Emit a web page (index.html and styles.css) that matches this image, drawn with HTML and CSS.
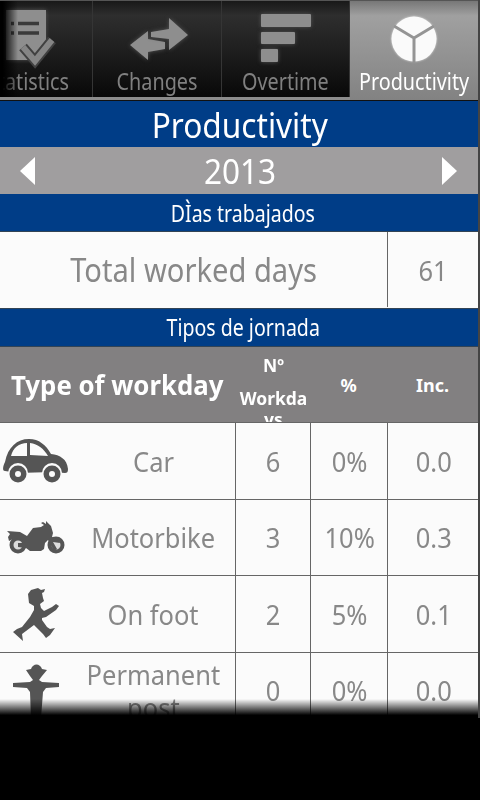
FILE: index.html
```html
<!DOCTYPE html>
<html lang="en">

<head>
  <meta charset="UTF-8">
  <title>Productivity</title>
  <link rel="stylesheet" href="styles.css">
</head>

<body>
  <div class="screen">
    <nav class="tabs">
      <div class="tab tab-cut">
        <svg width="56" height="60" viewBox="0 0 56 60">
          <path class="soft" d="M6 9h40v34l-9 12v4H6z" />
          <path class="dark-line" d="M11 22.500h3M18 22.500h21M11 32h3M18 32h21" />
          <path class="check-edge" d="M23 46l12 14 17-21" />
          <path class="check" d="M23 46l12 14 17-21" />
        </svg>
        <span class="label">Statistics</span>
      </div>
      <div class="tab">
        <svg width="60" height="60" viewBox="0 0 60 60">
          <path class="soft" d="M3 44L21 30v8l17 3v7l-17 3v8z" />
          <path class="soft" d="M24 31l18-3V17l19 17-19 15V38l-18-2z" />
        </svg>
        <span class="label">Changes</span>
      </div>
      <div class="tab">
        <svg width="60" height="60" viewBox="0 0 60 60">
          <rect class="soft" x="5" y="13" width="50" height="13" rx="1" />
          <rect class="soft" x="5" y="31" width="34" height="12" rx="1" />
          <rect class="soft" x="5" y="48" width="17" height="13" rx="1" />
        </svg>
        <span class="label">Overtime</span>
      </div>
      <div class="tab active">
        <svg width="60" height="60" viewBox="0 0 60 60">
          <circle class="pie" cx="30" cy="38" r="22.500" />
          <path class="pie-cut" d="M30 62V37L10 25M30 37l20-12" />
        </svg>
        <span class="label">Productivity</span>
      </div>
    </nav>

    <h1 class="title"><span>Productivity</span></h1>
    <div class="year">
      <svg width="15" height="28" viewBox="0 0 15 28"><path d="M15 0v28L0 14z" /></svg>
      <span>2013</span>
      <svg width="15" height="28" viewBox="0 0 15 28"><path d="M0 0v28l15-14z" /></svg>
    </div>
    <h2 class="section"><span>DÌas trabajados</span></h2>
    <div class="total">
      <div class="cell"><span>Total worked days</span></div>
      <div class="cell number"><span>61</span></div>
    </div>
    <h2 class="section types"><span>Tipos de jornada</span></h2>

    <div class="row head">
      <div class="type"><span>Type of workday</span></div>
      <div class="count"><p>Nº</p><p>Workda<br>ys</p></div>
      <div class="small"><span>%</span></div>
      <div class="small"><span>Inc.</span></div>
    </div>
    <div class="row">
      <div class="name">
        <svg width="72" height="76" viewBox="0 0 72 76">
          <path fill-rule="evenodd" d="M5 48C2 48 3 43 5 39C8 24 17 16 29 16c10 0 17 6 22 15c9 1 16 5 17 15c0 3-1 4-3 4l-13-1-34 1zM11 33h16V20c-8 0-14 5-16 13zM30 20v12l18 1c-4-7-10-12-18-13z" />
          <circle class="gap" cx="18" cy="50" r="10" /><circle class="gap" cx="52" cy="50" r="10" />
          <circle cx="18" cy="51" r="8.500" /><circle cx="52" cy="51" r="8.500" />
          <circle class="gap" cx="18" cy="51" r="3" /><circle class="gap" cx="52" cy="51" r="3" />
        </svg>
        <span>Car</span>
      </div>
      <div class="cell"><span>6</span></div>
      <div class="cell"><span>0%</span></div>
      <div class="cell"><span>0.0</span></div>
    </div>
    <div class="row">
      <div class="name">
        <svg width="72" height="76" viewBox="0 0 72 76">
          <circle class="wheel" cx="18" cy="45" r="6.500" />
          <circle class="wheel" cx="56" cy="45" r="6.500" />
          <path d="M7 31l13 1 7 4 6-8 8-1 3-2-3-2 2-1 3 2v-3l5 5 2 7-1 4 7 3 1 3-7-1 4 7-3 2-6-11-3 3-1 6-3 2H30l-4-3-8-1v-4h7l-3-3-7-2-6 3-1-4 2-3z" />
        </svg>
        <span>Motorbike</span>
      </div>
      <div class="cell"><span>3</span></div>
      <div class="cell"><span>10%</span></div>
      <div class="cell"><span>0.3</span></div>
    </div>
    <div class="row">
      <div class="name">
        <svg width="72" height="76" viewBox="0 0 72 76">
          <path d="M28 18l3-4 7-2 3 2 4-1-1 3-2 1 1 5 1 3-4 3 1 4 3 3 8-4 4-3 3 2-3 4-10 7-4 1v2l5 7 3 2 5-1-5 7-4 3-3-4-9-9-12 9 1 7-10-9 4-3 5-2 8-10 4-7v-4l-5-3z" />
        </svg>
        <span>On foot</span>
      </div>
      <div class="cell"><span>2</span></div>
      <div class="cell"><span>5%</span></div>
      <div class="cell"><span>0.1</span></div>
    </div>
    <div class="row">
      <div class="name">
        <svg width="72" height="76" viewBox="0 0 72 76">
          <path d="M26 17l5-1c2-6 9-6 11 0l5 1-5 6-3 4 3 2 17 1v4l-13 1-3 4-2 26H31l-1-26-3-4-14-1v-4l17-1 3-2-3-4z" />
        </svg>
        <span>Permanent<br>post</span>
      </div>
      <div class="cell"><span>0</span></div>
      <div class="cell"><span>0%</span></div>
      <div class="cell"><span>0.0</span></div>
    </div>
    <div class="fade"></div>
  </div>
</body>

</html>
```
FILE: styles.css
```css
* {
  box-sizing: border-box;
}

body {
  margin: 0;
  background: #000;
  font-family: "Noto Sans", "Open Sans", sans-serif;
}

.screen {
  position: relative;
  width: 480px;
  height: 718px;
  overflow: hidden;
  background: #fbfbfb;
  border-right: 2px solid #444;
}

span {
  display: inline-block;
  flex: none;
  white-space: nowrap;
}

/* tab bar */

.tabs {
  display: grid;
  grid-template-columns: 93px 129px 128px 128px;
  height: 101px;
  background: #8c8c8c;
  border-top: 1px solid #555;
  border-bottom: 1px solid #111;
}

.tab {
  display: flex;
  flex-direction: column;
  align-items: center;
  height: 96px;
  background: linear-gradient(#181818, #2e2e2e 15%, #1d1d1d 55%, #080808);
  border-right: 1px solid #353535;
  color: #808080;
}

.tab svg {
  flex: none;
  overflow: visible;
}

.tab-cut {
  align-items: flex-start;
  overflow: hidden;
  position: relative;
}

.tab-cut::after {
  content: "";
  position: absolute;
  left: 0;
  top: 0;
  width: 18px;
  height: 100%;
  background: linear-gradient(90deg, #000 15%, transparent);
}

.tab-cut .label {
  margin-left: -13px;
  transform-origin: left;
}

.tab.active {
  height: 99px;
  border: 0;
  background: linear-gradient(#777, #a0a0a0 15%, #949494 50%, #828282);
  color: #fff;
}

.label {
  font-size: 23px;
  line-height: 40px;
  transform: scaleX(.86);
}

.soft {
  fill: #8e8e8e;
  filter: drop-shadow(0 0 2px #555);
}

.dark-line {
  stroke: #3a3a3a;
  stroke-width: 3.5;
}

.check-edge,
.check {
  fill: none;
  stroke: #404040;
  stroke-width: 10;
}

.check {
  stroke: #858585;
  stroke-width: 6;
}

.pie {
  fill: #fafafa;
  filter: drop-shadow(0 0 1px #ddd);
}

.pie-cut {
  fill: none;
  stroke: #949494;
  stroke-width: 3;
}

/* headings */

.title,
.section {
  display: flex;
  align-items: center;
  justify-content: center;
  margin: 0;
  background: #003d87;
  color: #fff;
  font-weight: normal;
}

.title {
  height: 46px;
  padding: 2px 0 0 1px;
  font-size: 34px;
}

.title span {
  transform: scaleX(.93);
}

.section {
  height: 38px;
  padding-left: 8px;
  font-size: 23px;
  border-bottom: 1px solid #345;
}

.section span {
  transform: scaleX(.85);
}

.types {
  height: 39px;
  padding-bottom: 1px;
  border-top: 1px solid #345;
}

.year {
  display: flex;
  align-items: center;
  justify-content: space-between;
  height: 47px;
  padding: 0 21px 0 20px;
  background: #a09e9f;
  color: #fff;
  font-size: 35px;
}

.year span {
  margin-left: 3px;
  transform: scaleX(.9);
}

.year svg {
  fill: #fff;
}

/* tables */

.total {
  display: grid;
  grid-template-columns: 387px 91px;
  height: 76px;
  padding-bottom: 1px;
  font-size: 32px;
}

.cell {
  display: flex;
  align-items: center;
  justify-content: center;
  min-width: 0;
  border-left: 1px solid #666;
  color: #888;
}

.total .cell:first-child {
  padding-bottom: 1px;
  border: 0;
}

.cell span,
.name span {
  transform: scaleX(.91);
}

.number {
  font-size: 28px;
}

.row {
  display: grid;
  grid-template-columns: 235px 75px 77px 91px;
  height: 76.5px;
  border-bottom: 1px solid #666;
  font-size: 28px;
}

.row .cell {
  padding: 0 0 1px 1px;
}

.name {
  display: grid;
  grid-template-columns: 72px 163px;
  align-items: center;
  justify-items: center;
  color: #888;
  line-height: 33px;
  text-align: center;
}

.name svg {
  fill: #555;
}

.name .gap {
  fill: #fbfbfb;
}

.name .wheel {
  fill: #ddd;
  stroke: #555;
  stroke-width: 4;
}

.head {
  height: 76px;
  background: #828081;
  color: #fff;
  font-weight: bold;
}

.head div {
  display: flex;
  align-items: center;
  justify-content: center;
  min-width: 0;
}

.type span {
  font-size: 27px;
  transform: scaleX(.955);
}

.head .count {
  display: block;
  overflow: hidden;
  text-align: center;
  font-size: 18px;
  line-height: 21px;
}

.count p {
  margin: 8px -5px 12px -3px;
  transform: scaleX(.97);
}

.head .small {
  font-size: 18px;
}

/* the list disappears under the bottom edge */

.fade {
  position: absolute;
  left: 0;
  right: -2px;
  bottom: 0;
  height: 19px;
  background: linear-gradient(transparent, #000 85%);
}
```
